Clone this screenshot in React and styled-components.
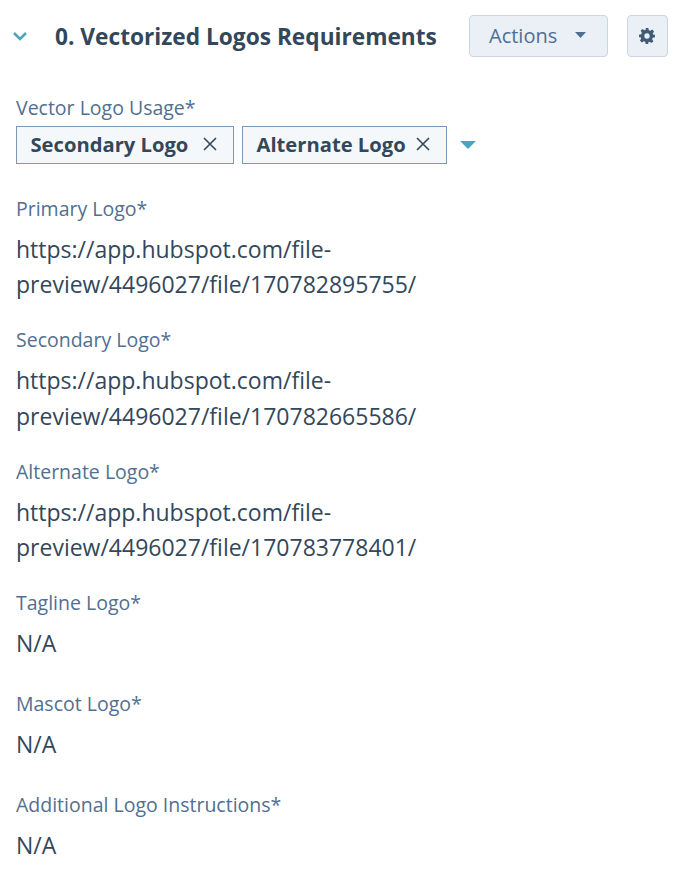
import styled, { createGlobalStyle } from "styled-components"

const Global = createGlobalStyle`
body {
  margin: 0;
  background: #fff;
  font-family: "Open Sans", "Noto Sans", sans-serif;
}
`

const Page = styled.div`
width: 688px;
height: 888px;
overflow: hidden;
padding: 15px 20px 0 16px;
box-sizing: border-box;
`
const Header = styled.header`
display: flex;
align-items: center;
height: 42px;
margin-bottom: 37px;
`
const Toggle = styled.svg`
width: 16px;
height: 10px;
margin-left: -4px;
margin-right: 27px;
flex: none;
`
const Title = styled.h2`
margin: 0;
flex: 1;
font-size: 22.7px;
font-weight: 700;
color: #33475b;
white-space: nowrap;
`
const ActionsButton = styled.button`
display: flex;
align-items: center;
justify-content: space-between;
box-sizing: border-box;
width: 138.5px;
height: 42px;
padding: 0 21px 2px 19px;
margin-right: 19px;
background: #eaf0f6;
border: 1.5px solid #cbd6e2;
border-radius: 4px;
color: #506e91;
font: 400 20px "Open Sans", sans-serif;
`
const GearButton = styled.button`
display: flex;
align-items: center;
justify-content: center;
box-sizing: border-box;
width: 41.5px;
height: 42px;
padding: 0;
background: #eaf0f6;
border: 1.5px solid #cbd6e2;
border-radius: 4px;
`
const Field = styled.section`
margin-bottom: 23.5px;
`
const Label = styled.div`
font-size: 19.5px;
line-height: 28px;
color: #516f90;
`
const Value = styled.div`
margin-top: 9px;
min-height: 40.5px;
font-size: 23px;
line-height: 35.5px;
color: #33475b;
width: 420px;
`
const TagRow = styled.div`
display: flex;
align-items: center;
gap: 8px;
margin-top: 4px;
padding-bottom: 7px;
`
const Tag = styled.div`
display: flex;
align-items: center;
justify-content: space-between;
box-sizing: border-box;
width: ${(p) => p.$width}px;
height: 38px;
padding: 0 16px 2px 13.5px;
background: #f5f8fa;
border: 1.5px solid #7c98b6;
font-size: 20.2px;
font-weight: 700;
color: #33475b;
white-space: nowrap;
`
const Caret = styled.svg`
width: ${(p) => p.$w}px;
height: ${(p) => p.$h}px;
flex: none;
`
const DropCaret = styled(Caret)`
margin-left: 5px;
`

const XIcon = () => (
  <svg width="14" height="14" viewBox="0 0 14 14">
    <path d="M1 1l12 12M13 1L1 13" stroke="#33475b" strokeWidth="1.6" fill="none" />
  </svg>
)

const GearIcon = () => (
  <svg width="16" height="16" viewBox="0 0 24 24">
    <path
      fill="#425b76"
      fillRule="evenodd"
      d="M10 0h4l.7 3.4 2.2.9 2.9-1.9 2.8 2.8-1.9 2.9.9 2.2L24 10v4l-3.4.7-.9 2.2 1.9 2.9-2.8 2.8-2.9-1.9-2.2.9L14 24h-4l-.7-3.4-2.2-.9-2.9 1.9-2.8-2.8 1.9-2.9-.9-2.2L0 14v-4l3.4-.7.9-2.2-1.9-2.9 2.8-2.8 2.9 1.9 2.2-.9zM12 8a4 4 0 1 0 0 8 4 4 0 0 0 0-8z"
    />
  </svg>
)

const fields = [
  { label: "Primary Logo*", value: "https://app.hubspot.com/file-preview/4496027/file/170782895755/" },
  { label: "Secondary Logo*", value: "https://app.hubspot.com/file-preview/4496027/file/170782665586/" },
  { label: "Alternate Logo*", value: "https://app.hubspot.com/file-preview/4496027/file/170783778401/" },
  { label: "Tagline Logo*", value: "N/A" },
  { label: "Mascot Logo*", value: "N/A" },
  { label: "Additional Logo Instructions*", value: "N/A" },
]

const App = () => {
  return (
    <Page>
      <Global />
      <Header>
        <Toggle viewBox="0 0 16 10">
          <path d="M2 2l6 6 6-6" stroke="#4ba5bd" strokeWidth="2.6" fill="none" />
        </Toggle>
        <Title>0. Vectorized Logos Requirements</Title>
        <ActionsButton>
          Actions
          <Caret $w={11} $h={6} viewBox="0 0 11 6">
            <path d="M0 0h11L5.5 6z" fill="#506e91" />
          </Caret>
        </ActionsButton>
        <GearButton>
          <GearIcon />
        </GearButton>
      </Header>
      <Field>
        <Label>Vector Logo Usage*</Label>
        <TagRow>
          <Tag $width={218}>
            Secondary Logo
            <XIcon />
          </Tag>
          <Tag $width={205}>
            Alternate Logo
            <XIcon />
          </Tag>
          <DropCaret $w={16} $h={8} viewBox="0 0 16 8">
            <path d="M0 0h16L8 8z" fill="#4ba5bd" />
          </DropCaret>
        </TagRow>
      </Field>
      {fields.map((f) => (
        <Field key={f.label}>
          <Label>{f.label}</Label>
          <Value>{f.value}</Value>
        </Field>
      ))}
    </Page>
  )
}

export default App
